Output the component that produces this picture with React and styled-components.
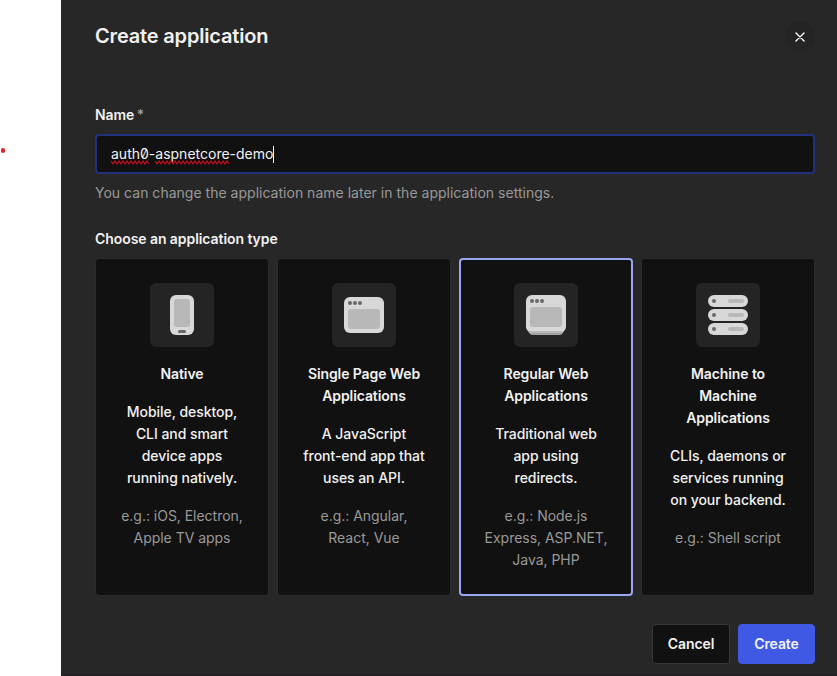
import React from "react";
import styled, { createGlobalStyle } from "styled-components";

const Global = createGlobalStyle`
  * { box-sizing: border-box; }
  body { margin: 0; background: #fff; overflow: hidden; }
  button, input { font-family: inherit; }
`;

const Page = styled.div`
  display: flex;
  width: 837px;
  height: 676px;
  background: #fff;
  font-family: Inter, "Liberation Sans", sans-serif;
  font-size: 14px;
  line-height: 22px;
  color: #f1f1f1;
`;

const Backdrop = styled.div`
  width: 61px;
  flex: none;
  padding-top: 148px;
`;

const RequiredDot = styled.div`
  width: 4.5px;
  height: 4.5px;
  margin-left: 0.6px;
  border-radius: 50%;
  background: #ec1c24;
`;

const Dialog = styled.main`
  flex: 1;
  display: flex;
  flex-direction: column;
  padding: 20px 22px 0 34px;
  background: #272727;
  border-bottom: 2px solid #232123;
`;

const Header = styled.header`
  display: flex;
  flex: none;
  justify-content: space-between;
  height: 32px;
`;

const Title = styled.h1`
  margin: 0;
  font-size: 20px;
  line-height: 32px;
  font-weight: 600;
  white-space: nowrap;
  letter-spacing: -0.17px;
`;

const CloseButton = styled.button`
  display: grid;
  place-items: center;
  width: 30px;
  height: 30px;
  margin: 2px 0 0;
  padding: 0;
  border: 0;
  border-radius: 50%;
  background: #242424;
`;

const Label = styled.div`
  font-weight: 600;
  letter-spacing: ${(p) => p.$tracking || "-0.1px"};
  margin-top: ${(p) => p.$top}px;
  margin-bottom: 8px;
  white-space: nowrap;
`;

const Asterisk = styled.span`
  margin-left: 2.5px;
  font-weight: 500;
  color: #a0a0a0;
`;

const NameField = styled.div`
  display: flex;
  flex: none;
  align-items: center;
  width: 720px;
  height: 40px;
  padding: 0 14px;
  border: 2px solid #21307f;
  border-radius: 4px;
  background: #111;
  font-feature-settings: "zero";
  white-space: nowrap;
`;

const Misspelled = styled.span`
  position: relative;
`;

const Squiggle = styled.svg`
  position: absolute;
  left: 0;
  top: 17px;
  width: 100%;
  height: 5px;
`;

const Caret = styled.span`
  width: 1px;
  height: 17px;
  background: #fff;
`;

const Hint = styled.div`
  margin-top: 8px;
  color: #999;
  letter-spacing: 0.015px;
  white-space: nowrap;
`;

const Cards = styled.div`
  display: grid;
  flex: none;
  grid-template-columns: repeat(4, 174px);
  gap: 8px;
  height: 338px;
`;

const Card = styled.section`
  display: flex;
  flex-direction: column;
  align-items: center;
  gap: 16px;
  padding: ${(p) => (p.$selected ? 23 : 24)}px 0;
  border: ${(p) => (p.$selected ? "2px solid #99a7f1" : "1px solid #2b2b2b")};
  border-radius: 4px;
  background: #111;
  text-align: center;
  white-space: pre;
`;

const IconTile = styled.div`
  width: 64px;
  height: 64px;
  border-radius: 6px;
  background: #242424;
`;

const CardTitle = styled.div`
  font-weight: 600;
  letter-spacing: -0.1px;
`;

const Description = styled.div`
  font-weight: 500;
  letter-spacing: -0.05px;
`;

const Example = styled.div`
  color: #999;
  letter-spacing: -0.03px;
`;

const Footer = styled.footer`
  display: flex;
  justify-content: flex-end;
  gap: 8px;
  margin-top: 28px;
`;

const Button = styled.button`
  width: ${(p) => (p.$primary ? 77 : 78)}px;
  height: 40px;
  padding: 0 0 2px;
  border: 1px solid ${(p) => (p.$primary ? "#3f59e4" : "#373737")};
  border-radius: 4px;
  background: ${(p) => (p.$primary ? "#3f59e4" : "#111")};
  color: #f1f1f1;
  font-size: 14px;
  font-weight: 600;
  letter-spacing: -0.1px;
`;

const LIGHT = "#d8d8d8";
const MID = "#b8b8b8";
const DARK = "#686868";

const PhoneIcon = () => (
  <svg width="64" height="64" viewBox="0 0 64 64">
    <rect x="20" y="12" width="24" height="40" rx="6" fill={LIGHT} />
    <rect x="24" y="16" width="16" height="28" rx="3" fill={MID} />
    <rect x="28" y="47" width="8" height="3" rx="1.5" fill={DARK} />
  </svg>
);

const Dots = ({ y }) => (
  <g fill={DARK}>
    <circle cx="18" cy={y} r="2" />
    <circle cx="23" cy={y} r="2" />
    <circle cx="28" cy={y} r="2" />
  </g>
);

const BrowserIcon = () => (
  <svg width="64" height="64" viewBox="0 0 64 64">
    <rect x="12" y="14" width="40" height="36" rx="6" fill={LIGHT} />
    <Dots y={20} />
    <rect x="16" y="26" width="32" height="20" rx="3" fill={MID} />
  </svg>
);

const ServerBrowserIcon = () => (
  <svg width="64" height="64" viewBox="0 0 64 64">
    <clipPath id="server-browser-body">
      <path d="M18 12h28a6 6 0 0 1 6 6v26q0 1.4-.8 2.5L48.4 50.4Q47.3 52 45.5 52h-27Q16.7 52 15.6 50.4L12.8 46.5Q12 45.4 12 44V18a6 6 0 0 1 6-6Z" />
    </clipPath>
    <g clipPath="url(#server-browser-body)">
      <rect x="12" y="12" width="40" height="36" fill={LIGHT} />
      <rect x="12" y="48" width="40" height="2" fill={MID} />
      <rect x="12" y="50" width="40" height="2" fill="#a0a0a0" />
    </g>
    <Dots y={18} />
    <rect x="16" y="24" width="32" height="20" rx="3" fill={MID} />
  </svg>
);

const ServersIcon = () => (
  <svg width="64" height="64" viewBox="0 0 64 64">
    {[12, 26, 40].map((y) => (
      <g key={y}>
        <rect x="12" y={y} width="40" height="12" rx="6" fill={LIGHT} />
        <circle cx="18" cy={y + 6} r="2" fill={DARK} />
        <rect x="32" y={y + 4} width="16" height="4" rx="2" fill={MID} />
      </g>
    ))}
  </svg>
);

const TYPES = [
  {
    icon: PhoneIcon,
    title: "Native",
    description: "Mobile, desktop,\nCLI and smart\ndevice apps\nrunning natively.",
    example: "e.g.: iOS, Electron,\nApple TV apps",
  },
  {
    icon: BrowserIcon,
    title: "Single Page Web\nApplications",
    description: "A JavaScript\nfront-end app that\nuses an API.",
    example: "e.g.: Angular,\nReact, Vue",
  },
  {
    icon: ServerBrowserIcon,
    title: "Regular Web\nApplications",
    description: "Traditional web\napp using\nredirects.",
    example: "e.g.: Node.js\nExpress, ASP.NET,\nJava, PHP",
    selected: true,
  },
  {
    icon: ServersIcon,
    title: "Machine to\nMachine\nApplications",
    description: "CLIs, daemons or\nservices running\non your backend.",
    example: "e.g.: Shell script",
  },
];

const wavePath = (width) => {
  let d = "M0 1";
  for (let x = 2, down = true; x <= width; x += 2, down = !down) d += `L${x} ${down ? 4 : 1}`;
  return d;
};

const Typo = ({ children, width }) => (
  <Misspelled>
    {children}
    <Squiggle>
      <path d={wavePath(width)} fill="none" stroke="#d4101c" strokeWidth="1.1" />
    </Squiggle>
  </Misspelled>
);

export default function App() {
  return (
    <Page>
      <Global />
      <Backdrop>
        <RequiredDot />
      </Backdrop>
      <Dialog>
        <Header>
          <Title>Create application</Title>
          <CloseButton aria-label="Close">
            <svg width="10" height="10" viewBox="0 0 10 10">
              <path d="M1 1l8 8M9 1l-8 8" stroke="#fff" strokeWidth="1.4" strokeLinecap="round" />
            </svg>
          </CloseButton>
        </Header>
        <Label $top={52}>
          Name<Asterisk>*</Asterisk>
        </Label>
        <NameField>
          <Typo width={38}>auth0</Typo>-<Typo width={74}>aspnetcore</Typo>-demo
          <Caret />
        </NameField>
        <Hint>You can change the application name later in the application settings.</Hint>
        <Label $top={24} $tracking="-0.07px">Choose an application type</Label>
        <Cards>
          {TYPES.map(({ icon: Icon, title, description, example, selected }) => (
            <Card key={title} $selected={selected}>
              <IconTile>
                <Icon />
              </IconTile>
              <CardTitle>{title}</CardTitle>
              <Description>{description}</Description>
              <Example>{example}</Example>
            </Card>
          ))}
        </Cards>
        <Footer>
          <Button>Cancel</Button>
          <Button $primary>Create</Button>
        </Footer>
      </Dialog>
    </Page>
  );
}
